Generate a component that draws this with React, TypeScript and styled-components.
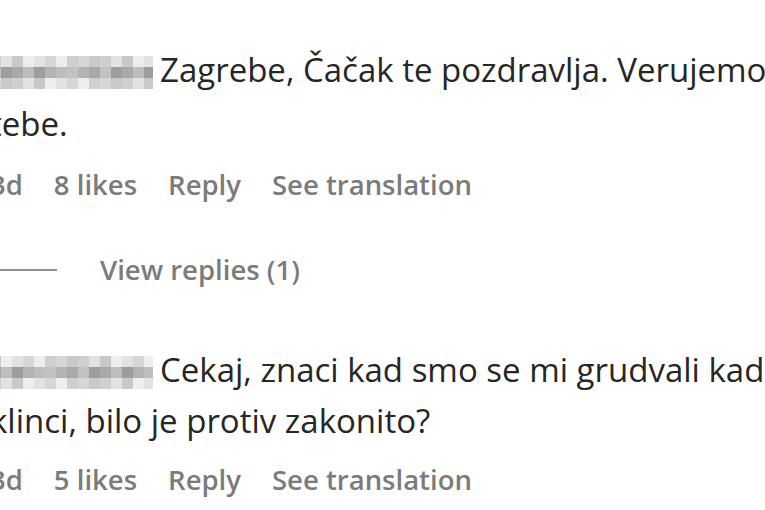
import React, { FC } from 'react';
import styled, { createGlobalStyle } from 'styled-components';

const GlobalStyle = createGlobalStyle`
  html, body {
    margin: 0;
    padding: 0;
    background: #ffffff;
    overflow: hidden;
  }
  body {
    width: 765px;
    height: 510px;
  }
`;

const Page = styled.div`
  width: 765px;
  height: 510px;
  overflow: hidden;
  font-family: 'Open Sans', 'Noto Sans', sans-serif;
  box-sizing: border-box;
  padding-top: 43px;
`;

const Shift = styled.div`
  margin-left: -10px;
  display: flex;
  flex-direction: column;
`;

const Comment = styled.div<{ $gap?: number }>`
  display: flex;
  flex-direction: column;
  margin-top: ${p => p.$gap || 0}px;
`;

const Body = styled.div<{ $lh: number }>`
  font-size: 33px;
  line-height: ${p => p.$lh}px;
  color: #262626;
  white-space: nowrap;
`;

const Mosaic = styled.svg`
  display: inline-block;
  vertical-align: -7px;
  margin-right: 7px;
`;

const Meta = styled.div`
  display: flex;
  gap: 31px;
  margin-top: 16px;
  font-size: 27.5px;
  font-weight: 600;
  color: #7b7b7b;
  line-height: 36px;
  white-space: nowrap;
`;

const Replies = styled.div`
  display: flex;
  align-items: center;
  margin-top: 49px;
  font-size: 27.5px;
  font-weight: 600;
  color: #7b7b7b;
  line-height: 36px;
`;

const Dash = styled.span`
  display: inline-block;
  width: 67px;
  height: 2px;
  background: #8e8e8e;
  margin-right: 43px;
`;

// greys for the blurred username block
const shades = [
  '#c9c9c9', '#bdbdbd', '#d6d6d6', '#a9a9a9', '#e2e2e2', '#b3b3b3', '#cfcfcf', '#9d9d9d', '#eeeeee', '#c2c2c2',
];

const Blur: FC<{ seed: number; width: number }> = ({ seed, width }) => {
  const cols = Math.ceil(width / 11);
  const cells: React.ReactElement[] = [];
  for (let r = 0; r < 3; r++) {
    for (let c = 0; c < cols; c++) {
      const i = (c * 7 + r * 3 + seed * 5 + ((c * c + seed) % 4)) % shades.length;
      cells.push(<rect key={r + '-' + c} x={c * 11} y={r * 11} width={11} height={11} fill={shades[i]} />);
    }
  }
  return (
    <Mosaic width={width} height={33} viewBox={`0 0 ${width} 33`}>
      {cells}
    </Mosaic>
  );
};

interface IComment {
  lines: [string, string];
  likes: number;
  seed: number;
  lh: number;
}

const comments: IComment[] = [
  { lines: ['Zagrebe, Čačak te pozdravlja. Verujemo u', 'tebe.'], likes: 8, seed: 1, lh: 54 },
  { lines: ['Cekaj, znaci kad smo se mi grudvali kad smo bili mali', 'klinci, bilo je protiv zakonito?'], likes: 5, seed: 4, lh: 51 },
];

const MetaRow: FC<{ likes: number }> = ({ likes }) => (
  <Meta>
    <span>3d</span>
    <span>{likes} likes</span>
    <span>Reply</span>
    <span>See translation</span>
  </Meta>
);

const CommentItem: FC<{ c: IComment; gap?: number }> = ({ c, gap }) => (
  <Comment $gap={gap}>
    <Body $lh={c.lh}>
      <Blur seed={c.seed} width={163} />
      {c.lines[0]}
      <br />
      {c.lines[1]}
    </Body>
    <MetaRow likes={c.likes} />
  </Comment>
);

const App: FC = () => {
  const [first, second] = comments;
  return (
    <>
      <GlobalStyle />
      <Page>
        <Shift>
          <CommentItem c={first} />
          <Replies>
            <Dash />
            View replies (1)
          </Replies>
          <CommentItem c={second} gap={56} />
        </Shift>
      </Page>
    </>
  );
};

export default App;
